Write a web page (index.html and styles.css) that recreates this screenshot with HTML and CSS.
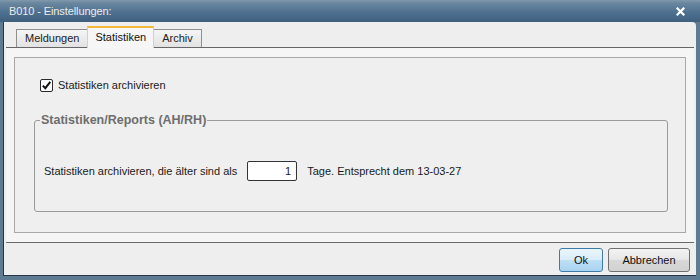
FILE: index.html
```html
<!DOCTYPE html>
<html lang="de">
<head>
    <meta charset="UTF-8">
    <title>B010 - Einstellungen</title>
    <link rel="stylesheet" href="styles.css">
</head>
<body>

    <div class="window">
        <div class="titlebar">
            <span class="title">B010 - Einstellungen:</span>
            <svg class="close" width="9" height="9" viewBox="0 0 9 9">
                <path d="M1.5 1.5 L7.5 7.5 M7.5 1.5 L1.5 7.5" stroke="#fff" stroke-width="2.2" stroke-linecap="square"/>
            </svg>
        </div>

        <div class="client">
            <div class="tabctl">
                <div class="tabbar">
                    <div class="tab">Meldungen</div>
                    <div class="tab active">Statistiken</div>
                    <div class="tab">Archiv</div>
                </div>

                <div class="panel">
                    <div class="page">
                        <label class="check-row">
                            <span class="checkbox">
                                <svg width="11" height="11" viewBox="0 0 11 11">
                                    <path d="M1.8 5.6 L4.3 8.2 L9.3 1.8" fill="none" stroke="#111" stroke-width="2"/>
                                </svg>
                            </span>
                            Statistiken archivieren
                        </label>

                        <fieldset class="group">
                            <legend>Statistiken/Reports (AH/RH)</legend>
                            <div class="age-row">
                                <span>Statistiken archivieren, die älter sind als</span>
                                <span class="num-input">1</span>
                                <span>Tage. Entsprecht dem 13-03-27</span>
                            </div>
                        </fieldset>
                    </div>
                </div>
            </div>

            <!-- dialog buttons -->
            <div class="footer">
                <button class="btn btn-default">Ok</button>
                <button class="btn">Abbrechen</button>
            </div>
        </div>
    </div>

</body>
</html>
```

FILE: styles.css
```css
/* Page */
body {
    margin: 0;
    font-family: 'Liberation Sans', Arial, sans-serif;
    font-size: 11px;
    color: #1a1a1a;
}

/* Window frame */
.window {
    width: 700px;
    height: 280px;
    box-sizing: border-box;
    background-color: #5e7b92;
    display: flex;
    flex-direction: column;
}

.titlebar {
    height: 22px;
    flex: none;
    display: flex;
    align-items: center;
    justify-content: space-between;
    padding: 0 15px 0 9px;
    background: linear-gradient(to bottom, #8299ab 0px, #6a879f 3px, #4f7190 12px, #3e607d 22px);
}

.title {
    color: #ececec;
    font-size: 11px;
    letter-spacing: -0.1px;
}

.close {
    display: block;
}

.client {
    flex: 1;
    min-height: 0;
    margin: 0 4px 4px 3px;
    border-left: 1px solid #26364a;
    border-bottom: 1px solid #26364a;
    border-top-right-radius: 4px;
    background-color: #eeeeee;
    display: flex;
    flex-direction: column;
}

/* Tab control */
.tabctl {
    margin: 5px 2px 0 2px;
    border-bottom: 1px solid #6a6a6a;
}

.tabbar {
    height: 20px;
    display: flex;
    align-items: flex-end;
    padding-left: 10px;
    border-bottom: 1px solid #666;
}

.tab {
    height: 17px;
    line-height: 17px;
    padding: 0 8px;
    border: 1px solid #8f8f8f;
    border-bottom: none;
    background: linear-gradient(to bottom, #f5f5f5, #e2e2e2);
    color: #222;
    margin-right: -1px;
}

.tab.active {
    position: relative;
    z-index: 1;
    height: 20px;
    line-height: 19px;
    padding: 0 7px;
    margin-bottom: -1px;
    border: 1px solid #ecd08a;
    border-top: 2px solid #f2b83a;
    border-bottom: none;
    background: #f6f6f6;
    color: #111;
}

.panel {
    background-color: #f5f5f5;
    padding: 9px 8px 9px 8px;
}

.page {
    box-sizing: border-box;
    height: 176px;
    border: 1px solid #a8a8a8;
    background-color: #efefef;
    padding: 20px 17px 0 19px;
}

/* Checkbox */
.check-row {
    display: flex;
    align-items: center;
    margin-left: 6px;
    height: 14px;
}

.checkbox {
    width: 11px;
    height: 11px;
    border: 1px solid #2a2a2a;
    border-radius: 2px;
    background-color: #fff;
    margin-right: 5px;
    display: flex;
}

/* Group box */
.group {
    margin: 20px 0 0 0;
    padding: 0 0 30px 5px;
    border: 1px solid #9a9a9a;
    border-radius: 3px;
}

.group legend {
    padding: 0 1px;
    font-weight: bold;
    font-size: 12.5px;
    line-height: 16px;
    color: #6e6e6e;
}

.age-row {
    display: flex;
    align-items: center;
    margin: 33px 0 0 4px;
}

.num-input {
    width: 43px;
    height: 18px;
    line-height: 19px;
    border: 1px solid #333;
    border-radius: 2px;
    background-color: #fff;
    text-align: right;
    padding-right: 5px;
    margin: 0 10px 0 10px;
}

/* Footer buttons */
.footer {
    display: flex;
    justify-content: flex-end;
    gap: 5px;
    padding: 5px 6px 0 0;
}

.btn {
    height: 24px;
    padding: 0;
    font-family: 'Liberation Sans', Arial, sans-serif;
    font-size: 11px;
    color: #111;
    border: 1px solid #707070;
    border-radius: 3px;
    background: linear-gradient(to bottom, #f3f3f3 0%, #e6e6e6 50%, #d8d8d8 51%, #d2d2d2 100%);
    width: 82px;
}

.btn-default {
    width: 44px;
    border-color: #3d7bad;
    background: linear-gradient(to bottom, #eaf5fc 0%, #d9ecf9 50%, #bedff5 51%, #a9d2ef 100%);
}
```
